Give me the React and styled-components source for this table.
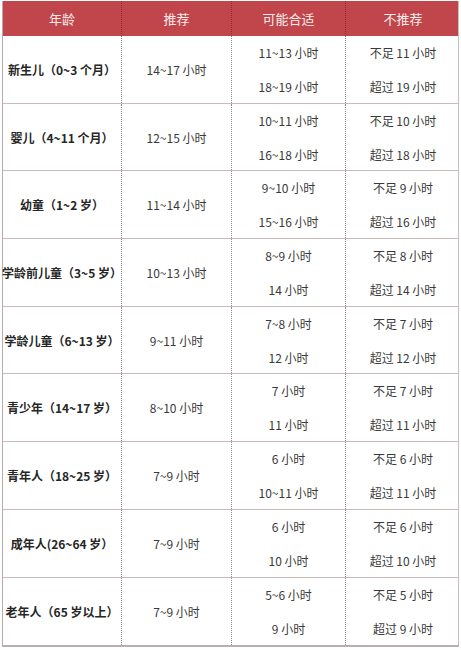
import React from "react";
import styled, { createGlobalStyle } from "styled-components";

const Global = createGlobalStyle`
  html, body { margin: 0; padding: 0; background: #ffffff; }
  body { font-family: "Noto Sans CJK SC", "Noto Sans", sans-serif; }
`;

const COLS = "119px 110px 114px 114px";

const Page = styled.div`
  padding: 1px 2px 0 2px;
  width: 457px;
`;

const Table = styled.div`
  width: 457px;
  border-left: 1px solid #b9abab;
  border-right: 1px solid #c9bcbc;
  border-bottom: 2px solid #bcaeae;
  box-sizing: border-box;
`;

const HeadRow = styled.div`
  display: grid;
  grid-template-columns: ${COLS};
  height: 35px;
  background: #c0464b;
`;

const HeadCell = styled.div`
  display: flex;
  align-items: center;
  justify-content: center;
  color: #fbecec;
  font-size: 13px;
  border-right: ${(p) => (p.$last ? "none" : "1px dotted #8e2c30")};
`;

const Row = styled.div`
  display: grid;
  grid-template-columns: ${COLS};
  height: 67.7px;
  box-sizing: border-box;
  border-bottom: ${(p) => (p.$last ? "none" : "1.5px solid #cdbaba")};
`;

const Cell = styled.div`
  display: flex;
  flex-direction: column;
  align-items: center;
  justify-content: center;
  gap: 17px;
  color: ${(p) => (p.$bold ? "#262626" : "#3a3a3a")};
  font-weight: ${(p) => (p.$bold ? 700 : 400)};
  font-size: 12px;
  line-height: 17px;
  white-space: nowrap;
  border-right: ${(p) => (p.$last ? "none" : "1px dotted #8a8a8a")};
`;

const headers = ["年龄", "推荐", "可能合适", "不推荐"];

const rows = [
  ["新生儿（0~3 个月）", "14~17 小时", ["11~13 小时", "18~19 小时"], ["不足 11 小时", "超过 19 小时"]],
  ["婴儿（4~11 个月）", "12~15 小时", ["10~11 小时", "16~18 小时"], ["不足 10 小时", "超过 18 小时"]],
  ["幼童（1~2 岁）", "11~14 小时", ["9~10 小时", "15~16 小时"], ["不足 9 小时", "超过 16 小时"]],
  ["学龄前儿童（3~5 岁）", "10~13 小时", ["8~9 小时", "14 小时"], ["不足 8 小时", "超过 14 小时"]],
  ["学龄儿童（6~13 岁）", "9~11 小时", ["7~8 小时", "12 小时"], ["不足 7 小时", "超过 12 小时"]],
  ["青少年（14~17 岁）", "8~10 小时", ["7 小时", "11 小时"], ["不足 7 小时", "超过 11 小时"]],
  ["青年人（18~25 岁）", "7~9 小时", ["6 小时", "10~11 小时"], ["不足 6 小时", "超过 11 小时"]],
  ["成年人(26~64 岁）", "7~9 小时", ["6 小时", "10 小时"], ["不足 6 小时", "超过 10 小时"]],
  ["老年人（65 岁以上）", "7~9 小时", ["5~6 小时", "9 小时"], ["不足 5 小时", "超过 9 小时"]],
];

export default function App() {
  return (
    <Page>
      <Global />
      <Table>
        <HeadRow>
          {headers.map((h, i) => (
            <HeadCell key={h} $last={i === headers.length - 1}>
              {h}
            </HeadCell>
          ))}
        </HeadRow>
        {rows.map((r, i) => (
          <Row key={r[0]} $last={i === rows.length - 1}>
            <Cell $bold>{r[0]}</Cell>
            <Cell>{r[1]}</Cell>
            <Cell>
              <span>{r[2][0]}</span>
              <span>{r[2][1]}</span>
            </Cell>
            <Cell $last>
              <span>{r[3][0]}</span>
              <span>{r[3][1]}</span>
            </Cell>
          </Row>
        ))}
      </Table>
    </Page>
  );
}
